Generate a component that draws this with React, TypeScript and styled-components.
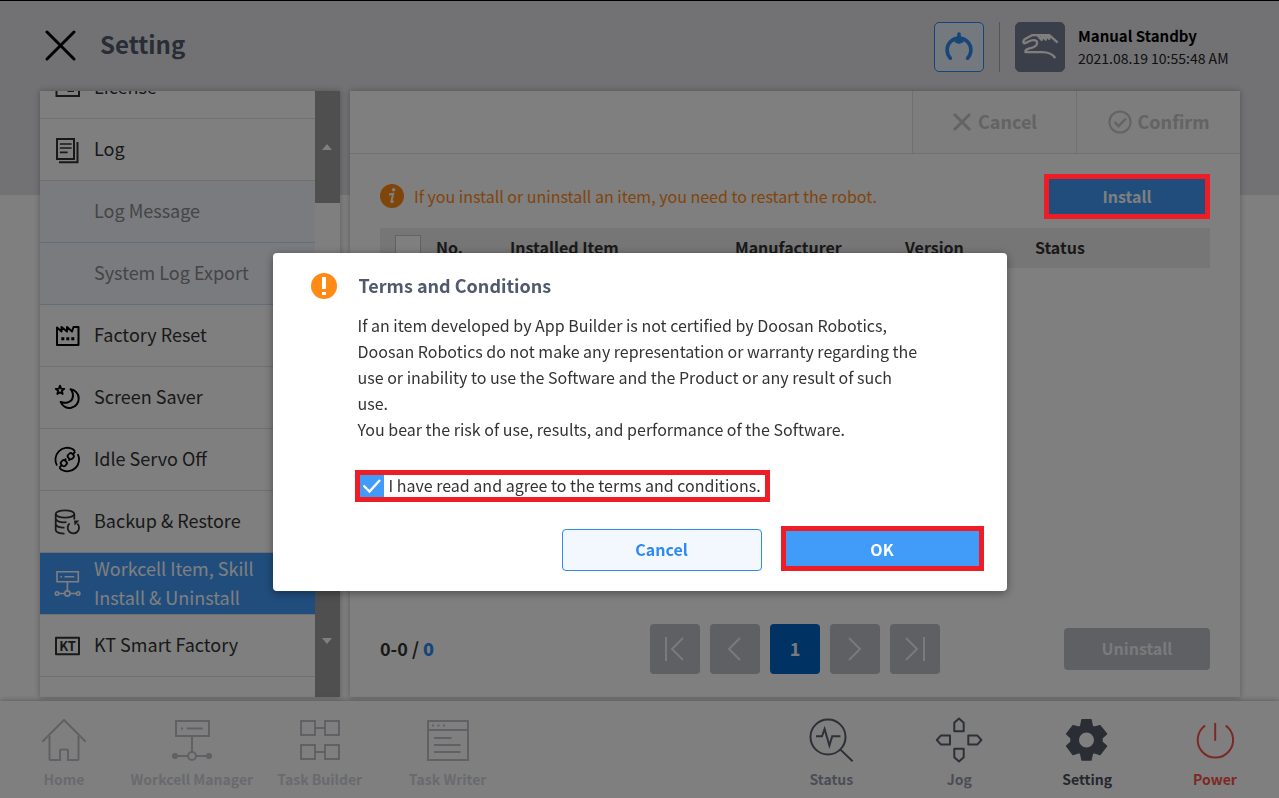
import React, { useLayoutEffect, useRef, useState } from "react";
import styled, { createGlobalStyle, css } from "styled-components";

const color = {
  blue: "#419bf9",
  blueText: "#2f8af0",
  navy: "#0064c8",
  slate: "#505a6c",
  orange: "#ff8a16",
  red: "#ee1c25",
  text: "#333333",
  line: "#e0e0e0",
  disabled: "#bcc0c8",
};

const GlobalStyle = createGlobalStyle`
  *, *::before, *::after { box-sizing: border-box; }
  body {
    margin: 0;
    font-family: "Noto Sans CJK KR", "Noto Sans", sans-serif;
    font-size: 16px;
    color: ${color.text};
  }
  button, input { font: inherit; color: inherit; margin: 0; }
  button { border: 0; padding: 0 0 2px; background: none; cursor: pointer; }
`;

const Page = styled.div`
  min-height: 100vh;
  display: flex;
  flex-direction: column;
  border-top: 1px solid #000;
  background: linear-gradient(#e4e4e9 194px, #fff 194px);
`;

const Header = styled.header`
  height: 90px;
  flex: none;
  display: flex;
  align-items: center;
  padding: 0 50px 0 45px;
`;

const CloseButton = styled.button`
  display: flex;
  margin-right: 24px;
`;

const PageTitle = styled.h1`
  margin: 0;
  flex: 1;
  padding-bottom: 4px;
  font-size: 24px;
  line-height: 30px;
  font-weight: 700;
  color: ${color.slate};
`;

const HeaderStatus = styled.div`
  display: flex;
  align-items: center;
  padding-top: 2px;
`;

const HeaderTile = styled.button<{ $dark?: boolean }>`
  width: 50px;
  height: 50px;
  padding: 0;
  border-radius: 5px;
  border: 1px solid ${(p) => (p.$dark ? "#767f92" : color.blueText)};
  background: ${(p) => (p.$dark ? "#767f92" : "#e6f2fc")};
  color: ${(p) => (p.$dark ? "#fff" : color.blueText)};
  display: grid;
  place-items: center;
`;

const Divider = styled.span`
  width: 1px;
  height: 50px;
  margin: 0 15px;
  background: #a8a8ae;
`;

const RobotState = styled.div`
  width: 151px;
  margin-left: 13px;
  font-size: 14px;
  line-height: 23px;
  white-space: nowrap;
  color: #222;
  strong {
    display: block;
    font-size: 15px;
    color: #000;
  }
`;

const Workspace = styled.main`
  flex: 1;
  min-height: 606px;
  display: flex;
  gap: 10px;
  padding: 0 39px 0 40px;
`;

const panel = css`
  background: #fff;
  box-shadow: 0 0 6px rgba(0, 0, 0, 0.3);
`;

const Sidebar = styled.nav`
  ${panel}
  flex: 0 0 300px;
  height: 606px;
  display: flex;
`;

const MenuList = styled.ul`
  list-style: none;
  margin: 0;
  padding: 0 0 62px;
  flex: 1;
  overflow: hidden;
`;

const MenuButton = styled.button<{ $sub?: boolean; $active?: boolean }>`
  width: 100%;
  height: 62px;
  display: grid;
  grid-template-columns: 32px 1fr;
  column-gap: 11px;
  align-items: center;
  padding: 0 0 0 11px;
  text-align: left;
  font-size: 18px;
  line-height: 29px;
  border-bottom: 1px solid ${(p) => (p.$sub ? "#c8dcf4" : color.line)};
  background: ${(p) => (p.$active ? color.blue : p.$sub ? "#f4f6ff" : "#fff")};
  color: ${(p) => (p.$active ? "#fff" : p.$sub ? "#8a8a8a" : color.text)};
  span {
    grid-column: 2;
    padding-bottom: 2px;
  }
`;

const ScrollRail = styled.div`
  width: 25px;
  display: flex;
  flex-direction: column;
  justify-content: space-between;
  background: #fff;
`;

const ScrollButton = styled.button`
  height: 112px;
  background: #9e9e9e;
  color: #fff;
  display: flex;
  align-items: center;
  padding: 0 0 0 7px;
`;

const Content = styled.section`
  ${panel}
  flex: 1;
  min-width: 0;
  height: 606px;
  display: flex;
  flex-direction: column;
`;

const Toolbar = styled.div`
  height: 63px;
  flex: none;
  display: flex;
  justify-content: flex-end;
  border-bottom: 1px solid ${color.line};
`;

const ToolbarButton = styled.button`
  width: 164px;
  padding: 0;
  display: flex;
  align-items: center;
  justify-content: center;
  gap: 6px;
  font-size: 18px;
  font-weight: 700;
  border-left: 1px solid ${color.line};
  background: #fafafa;
  color: #c6c6c6;
  span {
    padding-bottom: 2px;
  }
`;

const ContentBody = styled.div`
  flex: 1;
  display: flex;
  flex-direction: column;
  padding: 20px 30px 23px;
`;

const NoticeRow = styled.div`
  display: flex;
  align-items: center;
  justify-content: space-between;
  margin-bottom: 9px;
`;

const Notice = styled.p`
  margin: 0;
  padding-bottom: 2px;
  display: flex;
  align-items: center;
  gap: 10px;
  color: ${color.orange};
`;

const solidButton = css`
  height: 45px;
  font-weight: 700;
  color: #fff;
  background: ${color.blue};
`;

/* The red frame stays above the dimmed backdrop. */
const InstallButton = styled.button`
  ${solidButton}
  width: 166px;
  position: relative;
  &::after {
    content: "";
    position: absolute;
    inset: 0;
    z-index: 20;
    border: 5px solid ${color.red};
  }
`;

const ItemTable = styled.table`
  width: 100%;
  table-layout: fixed;
  border-collapse: collapse;
  th {
    height: 40px;
    padding: 0 0 2px;
    text-align: left;
    font-weight: 700;
    background: #ececec;
  }
  th:first-child {
    padding: 0 0 0 15px;
  }
`;

const SelectAll = styled.input`
  appearance: none;
  display: block;
  width: 26px;
  height: 26px;
  border: 1px solid #c4c4c4;
  background: #fff;
`;

const ListFooter = styled.div`
  margin-top: auto;
  display: grid;
  grid-template-columns: 1fr auto 1fr;
  align-items: center;
`;

const Range = styled.span`
  padding-bottom: 2px;
  font-size: 18px;
  font-weight: 700;
  b {
    color: ${color.blueText};
  }
`;

const Pager = styled.div`
  display: flex;
  gap: 10px;
`;

const PageButton = styled.button<{ $current?: boolean }>`
  width: 50px;
  height: 50px;
  padding: ${(p) => (p.$current ? "0 0 2px" : "0")};
  border-radius: 4px;
  display: grid;
  place-items: center;
  font-size: 18px;
  font-weight: 700;
  background: ${(p) => (p.$current ? color.navy : color.disabled)};
  color: #f4f4f4;
`;

const UninstallButton = styled.button`
  justify-self: end;
  width: 146px;
  height: 42px;
  border-radius: 4px;
  font-weight: 700;
  background: ${color.disabled};
  color: #f4f4f4;
`;

const Dock = styled.footer`
  height: 97px;
  flex: none;
  margin-top: 4px;
  display: grid;
  grid-template-columns: repeat(10, 1fr);
  background: #fff;
  box-shadow: 0 0 6px rgba(0, 0, 0, 0.35);
`;

type Tone = "off" | "on" | "current" | "danger";
const dockIcon: Record<Tone, string> = {
  off: "#c2c3cb",
  on: "#5a606e",
  current: "#555b69",
  danger: "#f8524a",
};
const dockLabel: Record<Tone, string> = {
  off: "#d2d4dc",
  on: "#949bac",
  current: "#4a505e",
  danger: "#f8524a",
};

const DockButton = styled.button<{ $tone: Tone; $start?: boolean }>`
  ${(p) => p.$start && "grid-column-start: 7;"}
  display: flex;
  flex-direction: column;
  align-items: center;
  padding-top: 15px;
  font-size: 14px;
  line-height: 20px;
  font-weight: 700;
  white-space: nowrap;
  color: ${(p) => dockLabel[p.$tone]};
  svg {
    color: ${(p) => dockIcon[p.$tone]};
    margin-bottom: 5px;
  }
`;

const Backdrop = styled.div`
  position: fixed;
  inset: 0;
  z-index: 10;
  display: flex;
  align-items: center;
  justify-content: center;
  padding-top: 46px;
  background: rgba(0, 0, 0, 0.5);
`;

const Dialog = styled.section`
  width: 734px;
  padding: 20px 23px 20px 38px;
  border-radius: 4px;
  background: #fff;
  box-shadow: 0 2px 10px rgba(0, 0, 0, 0.4);
`;

const DialogHeader = styled.header`
  display: flex;
  align-items: center;
  gap: 22px;
  height: 26px;
  h2 {
    margin: 0;
    padding-bottom: 2px;
    font-size: 18px;
    line-height: 26px;
    color: ${color.slate};
  }
`;

const DialogText = styled.p`
  margin: 13px 0 28px 47px;
  line-height: 26px;
  white-space: nowrap;
`;

const Agreement = styled.label`
  display: inline-flex;
  align-items: center;
  gap: 5px;
  height: 32px;
  width: 415px;
  margin-left: 44px;
  border: 5px solid ${color.red};
  line-height: 20px;
  white-space: nowrap;
`;

const AgreementText = styled.span`
  padding-bottom: 2px;
`;

const CheckBox = styled.span`
  display: grid;
  input,
  svg {
    grid-area: 1 / 1;
  }
  input {
    appearance: none;
    width: 24px;
    height: 22px;
    background: #fff;
  }
  input:checked {
    background: ${color.blue};
  }
  svg {
    color: #fff;
    pointer-events: none;
  }
`;

const DialogActions = styled.div`
  display: flex;
  justify-content: flex-end;
  align-items: flex-end;
  gap: 19px;
  margin-top: 24px;
`;

const CancelButton = styled.button`
  width: 200px;
  height: 42px;
  border: 1px solid ${color.blueText};
  border-radius: 4px;
  font-weight: 700;
  color: ${color.blueText};
  background: #f3f8ff;
`;

const OkButton = styled.button`
  ${solidButton}
  width: 203px;
  padding: 0;
  border: 5px solid ${color.red};
`;

const Icon = ({
  size,
  width = 2,
  children,
}: {
  size: number;
  width?: number;
  children: React.ReactNode;
}) => (
  <svg
    width={size}
    height={size}
    viewBox={`0 0 ${size} ${size}`}
    fill="none"
    stroke="currentColor"
    strokeWidth={width}
    aria-hidden="true"
  >
    {children}
  </svg>
);

const menu: { label: React.ReactNode; sub?: boolean; active?: boolean; icon?: React.ReactNode }[] = [
  {
    label: "License",
    icon: (
      <>
        <path d="M5.5 7H28v17H5.5z" />
        <path d="M16.5 19H23M9 12H16" />
      </>
    ),
  },
  {
    label: "Log",
    icon: (
      <>
        <path d="M6 5H23V25H6zM26.5 8V28.3H8" />
        <path d="M9.5 10H20M9.5 14H20M9.5 18.3H16" strokeWidth="1.7" strokeLinecap="round" />
      </>
    ),
  },
  { label: "Log Message", sub: true },
  { label: "System Log Export", sub: true },
  {
    label: "Factory Reset",
    icon: (
      <g stroke="#000">
        <path
          d="M6 7.5 10.5 11.5V7L16 11.5V7L21 11.5 22.5 7H27.5V25H6z"
          strokeLinejoin="round"
        />
        <path d="M10.3 18.8h3M15.3 18.8h3M20.3 18.8h3" strokeWidth="3" />
      </g>
    ),
  },
  {
    label: "Screen Saver",
    icon: (
      <g stroke="#000" strokeLinejoin="round">
        <path d="M9 3.6 10.2 6.6 13.3 6.8 10.9 8.8 11.7 12 9 10.3 6.3 12 7.1 8.8 4.7 6.8 7.8 6.6z" strokeWidth="1.8" />
        <path d="M19.5 7.2A9.4 9.4 0 1 1 9.6 20C15 22 20.5 20 21.6 16C22.4 13 21.6 9.5 19.5 7.2z" />
      </g>
    ),
  },
  {
    label: "Idle Servo Off",
    icon: (
      <g stroke="#000" strokeWidth="1.8">
        <path d="M6 21.5A11.8 11.8 0 0 1 22 5.3L24 7.3M26.8 10.2A11.8 11.8 0 0 1 10.5 25.8L8.5 23.8" />
        <g transform="rotate(-45 16.3 15.7)">
          <rect x="8.6" y="12.9" width="5.6" height="5.6" rx="2.2" />
          <rect x="18.4" y="12.9" width="5.6" height="5.6" rx="2.2" />
          <path d="M5 15.7H8.6M24 15.7H27.6M14.2 14.2H16.2M16.4 17.2H18.4" />
        </g>
      </g>
    ),
  },
  {
    label: "Backup & Restore",
    icon: (
      <g strokeWidth="1.8">
        <ellipse cx="14" cy="8" rx="9.3" ry="3.6" />
        <path d="M4.7 8V24C4.7 26 8.5 27.6 13.5 27.6M23.3 8V13.5M4.7 13C6 15.5 10 16.7 15.5 16.2M4.7 18.5C6 20.7 9.5 21.8 13.5 21.6" />
        <path d="M18.6 17.4A5.7 5.7 0 1 0 26.4 17.6" />
        <path d="M23 14.6H28.4L23.6 19.4z" fill="currentColor" stroke="none" />
      </g>
    ),
  },
  {
    label: (
      <>
        Workcell Item, Skill
        <br />
        Install &amp; Uninstall
      </>
    ),
    active: true,
    icon: (
      <g strokeWidth="1.6">
        <path d="M6 3.8H27.3V13.8H6zM13.5 8.7H23.3M9.4 8.7h1.6M16.4 14V22.6M8 25.5H13.6M19.2 25.5H25.5" />
        <circle cx="16.4" cy="25.5" r="2.6" />
        <circle cx="6" cy="25.5" r="1.7" />
        <circle cx="27.2" cy="25.5" r="1.7" />
      </g>
    ),
  },
  {
    label: "KT Smart Factory",
    icon: (
      <>
        <path d="M5 7.8H28V24.2H5z" strokeLinejoin="round" />
        <text x="16.5" y="20.8" textAnchor="middle" fontSize="13" fontWeight="700" fill="currentColor" stroke="none">
          KT
        </text>
      </>
    ),
  },
];

const dock: { label: string; tone: Tone; start?: boolean; icon: React.ReactNode }[] = [
  {
    label: "Home",
    tone: "off",
    icon: (
      <>
        <path d="M2.3 25.7 24 4 45.7 25.7" />
        <path d="M9.5 20V43a1 1 0 0 0 1 1H20V34.5a1 1 0 0 1 1-1h6a1 1 0 0 1 1 1V44h9.5a1 1 0 0 0 1-1V20" />
      </>
    ),
  },
  {
    label: "Workcell Manager",
    tone: "off",
    icon: (
      <>
        <path d="M8 5H41V20H8zM18.7 12.5H34.7M13 12.5h2M24 20V36M7 40H20M28 40H41" />
        <circle cx="24" cy="40" r="4" />
        <g fill="currentColor" stroke="none">
          <circle cx="7" cy="40" r="3.1" />
          <circle cx="41" cy="40" r="3.1" />
        </g>
      </>
    ),
  },
  {
    label: "Task Builder",
    tone: "off",
    icon: (
      <path d="M5 5H19V19H5zM29 5H43V19H29zM19 12H29M5 29H19V43H5zM29 29H43V43H29zM19 36H29" />
    ),
  },
  {
    label: "Task Writer",
    tone: "off",
    icon: (
      <path d="M4 5H44V44H4zM4 14H44M8 9.5h2M13.5 9.5h2M19 9.5h2M10 22H27.5M10 29H36.5M10 36H36.5" />
    ),
  },
  {
    label: "Status",
    tone: "on",
    start: true,
    icon: (
      <>
        <circle cx="21" cy="21" r="17.5" />
        <path d="M33.2 33.4 45.6 45.2M9 20.3H15L17.6 13 22.4 29.5 25.2 20.2H33.4" />
      </>
    ),
  },
  {
    label: "Jog",
    tone: "on",
    icon: (
      <g strokeLinejoin="round">
        <path d="M19.3 15.3V6.7L24 2.5 28.7 6.7V15.3zM19.3 32.7V41.3L24 45.5 28.7 41.3V32.7z" />
        <path d="M15 19.4H6L1.8 24 6 28.6H15zM33.3 19.4H42.2L46.4 24 42.2 28.6H33.3z" />
      </g>
    ),
  },
  {
    label: "Setting",
    tone: "current",
    icon: (
      <path
        fill="currentColor"
        stroke="currentColor"
        strokeWidth="1.4"
        strokeLinejoin="round"
        fillRule="evenodd"
        d="M19 3.7H28L29.4 10.3 31 11.2 37 9.6 43.6 18 39 22V26L43.6 30 37 38.6 31 36.6 29.4 37.5 28 44H19L17.6 37.5 16 36.6 10 38.6 3.6 30 8 26V22L3.6 18 10 9.6 16 11.2 17.6 10.3zM23.5 15.8a8.2 8.2 0 1 0 0 16.4 8.2 8.2 0 0 0 0-16.4z"
      />
    ),
  },
  {
    label: "Power",
    tone: "danger",
    icon: <path d="M14 9.6A17.7 17.7 0 1 0 34.8 9.6M24.2 7V24.8" />,
  },
];

export default function App() {
  const listRef = useRef<HTMLUListElement>(null);
  const [agreed, setAgreed] = useState(true);

  useLayoutEffect(() => {
    if (listRef.current) listRef.current.scrollTop = 34;
  }, []);

  return (
    <>
      <GlobalStyle />
      <Page>
        <Header>
          <CloseButton aria-label="Close">
            <Icon size={31} width={3}>
              <path d="M2 2 29 29M29 2 2 29" stroke="#000" strokeLinecap="round" />
            </Icon>
          </CloseButton>
          <PageTitle>Setting</PageTitle>
          <HeaderStatus>
            <HeaderTile aria-label="Gripper">
              <Icon size={48} width={3.6}>
                <path d="M15.4 35.2A11.9 11.9 0 1 1 32.6 35.2" strokeLinecap="round" />
                <path d="M24 11V15" strokeLinecap="round" />
                <path d="M22.2 13H25.8V15.5L29 19 24 21 19 19 22.2 15.5z" fill="currentColor" stroke="none" />
              </Icon>
            </HeaderTile>
            <Divider />
            <HeaderTile $dark aria-label="Manual mode">
              <Icon size={48} width={2.3}>
                <path
                  strokeLinejoin="round"
                  d="M7.4 20C7 17.8 8 16.6 9.5 15.8L16 12.2H21.3L25.7 17V12.6L29.7 16.6V12.4L33.3 15.8V12.2L41.7 19.7M16 12.2H33.3M7.4 20C9 21 10.5 19.6 12 18.8 14.5 17.6 17 16.8 19.3 17.4 21.5 18.2 21.6 20.4 20.4 22 18.8 24.6 15 25 12 25.8 9.6 26.6 9.2 27.6 9.4 29.2H26C31.5 29.2 36.6 31 39.2 35.2"
                />
              </Icon>
            </HeaderTile>
            <RobotState>
              <strong>Manual Standby</strong>
              2021.08.19 10:55:48 AM
            </RobotState>
          </HeaderStatus>
        </Header>

        <Workspace>
          <Sidebar>
            <MenuList ref={listRef}>
              {menu.map((item, i) => (
                <li key={i}>
                  <MenuButton $sub={item.sub} $active={item.active}>
                    {item.icon && <Icon size={32}>{item.icon}</Icon>}
                    <span>{item.label}</span>
                  </MenuButton>
                </li>
              ))}
            </MenuList>
            <ScrollRail>
              <ScrollButton aria-label="Scroll up">
                <svg width="10" height="8" fill="currentColor">
                  <path d="M5 1 10 7H0z" />
                </svg>
              </ScrollButton>
              <ScrollButton aria-label="Scroll down">
                <svg width="10" height="8" fill="currentColor">
                  <path d="M5 7 10 1H0z" />
                </svg>
              </ScrollButton>
            </ScrollRail>
          </Sidebar>

          <Content>
            <Toolbar>
              <ToolbarButton>
                <Icon size={20} width={3}>
                  <path d="M2 2 18 18M18 2 2 18" />
                </Icon>
                <span>Cancel</span>
              </ToolbarButton>
              <ToolbarButton>
                <Icon size={24}>
                  <circle cx="12" cy="12" r="10.6" />
                  <path d="M6.5 12 10.5 16.2 18 8.5" strokeWidth="2.4" />
                </Icon>
                <span>Confirm</span>
              </ToolbarButton>
            </Toolbar>
            <ContentBody>
              <NoticeRow>
                <Notice>
                  <svg width="24" height="24" aria-hidden="true">
                    <circle cx="12" cy="12" r="12" fill={color.orange} />
                    <circle cx="13.6" cy="5.8" r="1.8" fill="#fff" />
                    <path
                      d="M9 10.6 13.2 9.8 11.4 17.4C11.2 18.6 12.4 18.2 13.6 16.8"
                      fill="none"
                      stroke="#fff"
                      strokeWidth="2"
                    />
                  </svg>
                  If you install or uninstall an item, you need to restart the robot.
                </Notice>
                <InstallButton>Install</InstallButton>
              </NoticeRow>
              <ItemTable>
                <colgroup>
                  <col style={{ width: 56 }} />
                  <col style={{ width: 74 }} />
                  <col style={{ width: 225 }} />
                  <col style={{ width: 170 }} />
                  <col style={{ width: 130 }} />
                  <col />
                </colgroup>
                <thead>
                  <tr>
                    <th scope="col">
                      <SelectAll type="checkbox" aria-label="Select all" />
                    </th>
                    <th scope="col">No.</th>
                    <th scope="col">Installed Item</th>
                    <th scope="col">Manufacturer</th>
                    <th scope="col">Version</th>
                    <th scope="col">Status</th>
                  </tr>
                </thead>
              </ItemTable>
              <ListFooter>
                <Range>
                  0-0 / <b>0</b>
                </Range>
                <Pager>
                  <PageButton aria-label="First page">
                    <Icon size={26}>
                      <path d="M4 1V25M21 2 10 13 21 24" />
                    </Icon>
                  </PageButton>
                  <PageButton aria-label="Previous page">
                    <Icon size={26}>
                      <path d="M18 2 7 13 18 24" />
                    </Icon>
                  </PageButton>
                  <PageButton $current>1</PageButton>
                  <PageButton aria-label="Next page">
                    <Icon size={26}>
                      <path d="M7 2 18 13 7 24" />
                    </Icon>
                  </PageButton>
                  <PageButton aria-label="Last page">
                    <Icon size={26}>
                      <path d="M22 1V25M4 2 15 13 4 24" />
                    </Icon>
                  </PageButton>
                </Pager>
                <UninstallButton>Uninstall</UninstallButton>
              </ListFooter>
            </ContentBody>
          </Content>
        </Workspace>

        <Dock>
          {dock.map((item) => (
            <DockButton key={item.label} $tone={item.tone} $start={item.start}>
              <Icon size={48}>{item.icon}</Icon>
              {item.label}
            </DockButton>
          ))}
        </Dock>
      </Page>

      <Backdrop>
        <Dialog role="dialog" aria-modal="true" aria-labelledby="terms-title">
          <DialogHeader>
            <svg width="26" height="26" aria-hidden="true">
              <circle cx="13" cy="13" r="13" fill={color.orange} />
              <path d="M13 4V16M13 19V22" stroke="#fff" strokeWidth="4" />
            </svg>
            <h2 id="terms-title">Terms and Conditions</h2>
          </DialogHeader>
          <DialogText>
            If an item developed by App Builder is not certified by Doosan Robotics,
            <br />
            Doosan Robotics do not make any representation or warranty regarding the
            <br />
            use or inability to use the Software and the Product or any result of such
            <br />
            use.
            <br />
            You bear the risk of use, results, and performance of the Software.
          </DialogText>
          <Agreement>
            <CheckBox>
              <input
                type="checkbox"
                checked={agreed}
                onChange={(e) => setAgreed(e.target.checked)}
              />
              {agreed && (
                <svg width="24" height="22" fill="none" stroke="currentColor" strokeWidth="2.4">
                  <path d="M3.5 10.5 9.5 16.5 20 5" />
                </svg>
              )}
            </CheckBox>
            <AgreementText>I have read and agree to the terms and conditions.</AgreementText>
          </Agreement>
          <DialogActions>
            <CancelButton>Cancel</CancelButton>
            <OkButton>OK</OkButton>
          </DialogActions>
        </Dialog>
      </Backdrop>
    </>
  );
}
